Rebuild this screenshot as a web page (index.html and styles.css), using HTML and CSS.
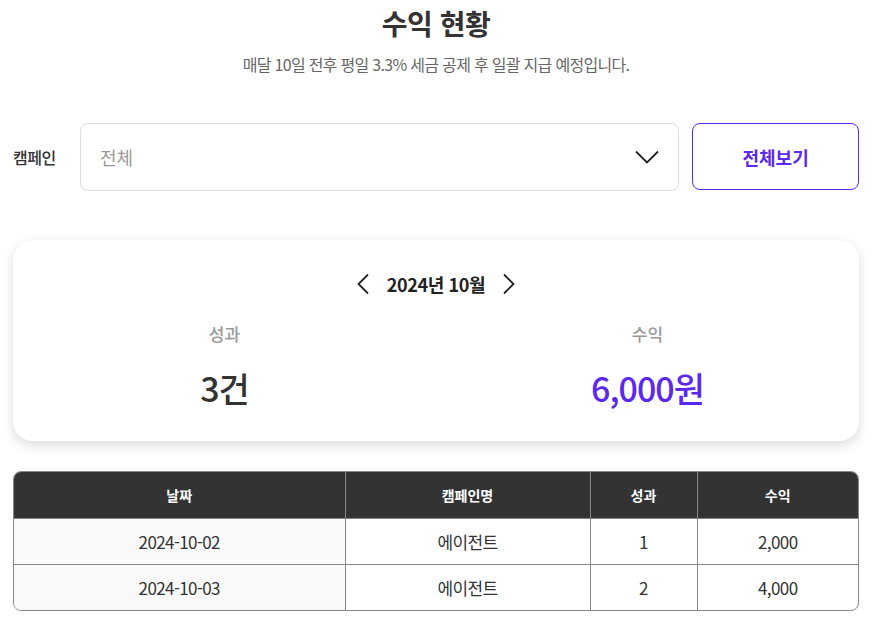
FILE: index.html
```html
<!DOCTYPE html>
<html lang="ko">
<head>
<meta charset="utf-8">
<link rel="stylesheet" href="styles.css">
</head>
<body>
<div class="page">
  <h1 class="title">수익 현황</h1>
  <p class="subtitle">매달 10일 전후 평일 3.3% 세금 공제 후 일괄 지급 예정입니다.</p>

  <div class="filter">
    <span class="filter-label">캠페인</span>
    <div class="select">
      <span class="select-value">전체</span>
      <svg class="select-arrow" width="24" height="14" viewBox="0 0 24 14"><path d="M1 1.5 L12 12.5 L23 1.5" fill="none" stroke="#222" stroke-width="1.8"/></svg>
    </div>
    <button class="btn-all">전체보기</button>
  </div>

  <div class="card">
    <div class="month-nav">
      <svg width="14" height="22" viewBox="0 0 14 22"><path d="M12 1.5 L2.5 11 L12 20.5" fill="none" stroke="#222" stroke-width="1.8"/></svg>
      <span class="month">2024년 10월</span>
      <svg width="14" height="22" viewBox="0 0 14 22"><path d="M2 1.5 L11.5 11 L2 20.5" fill="none" stroke="#222" stroke-width="1.8"/></svg>
    </div>
    <div class="stats">
      <div class="stat">
        <span class="stat-label">성과</span>
        <span class="stat-value">3건</span>
      </div>
      <div class="stat">
        <span class="stat-label">수익</span>
        <span class="stat-value purple">6,000원</span>
      </div>
    </div>
  </div>

  <div class="table-wrap">
    <table class="table">
      <colgroup>
        <col class="c1"><col class="c2"><col class="c3"><col class="c4">
      </colgroup>
      <thead>
        <tr><th>날짜</th><th>캠페인명</th><th>성과</th><th>수익</th></tr>
      </thead>
      <tbody>
        <tr><td class="date">2024-10-02</td><td>에이전트</td><td>1</td><td>2,000</td></tr>
        <tr><td class="date">2024-10-03</td><td>에이전트</td><td>2</td><td>4,000</td></tr>
      </tbody>
    </table>
  </div>
</div>
</body>
</html>
```

FILE: styles.css
```css
* { box-sizing: border-box; }
html, body { margin: 0; padding: 0; background: #fff; }
body {
  font-family: "Noto Sans CJK KR", "Noto Sans", sans-serif;
  color: #333;
}
.page {
  width: 846px;
  margin-left: 13px;
  padding-top: 3px;
}
.title {
  margin: 0;
  text-align: center;
  font-size: 28px;
  font-weight: 700;
  line-height: 40px;
  letter-spacing: -0.5px;
  color: #333;
}
.subtitle {
  margin: 9px 0 0;
  text-align: center;
  font-size: 16px;
  line-height: 24px;
  color: #666;
  letter-spacing: -0.7px;
}
.filter {
  display: flex;
  align-items: center;
  margin-top: 47px;
  height: 68px;
}
.filter-label {
  width: 67px;
  font-size: 16px;
  font-weight: 500;
  color: #333;
  letter-spacing: -0.5px;
}
.select {
  width: 600px;
  height: 68px;
  border: 1px solid #ddd;
  border-radius: 8px;
  display: flex;
  align-items: center;
  justify-content: space-between;
  padding: 0 19px 0 19px;
}
.select-value {
  font-size: 18px;
  color: #999;
}
.btn-all {
  margin-left: 13px;
  width: 167px;
  height: 67px;
  border: 1px solid #5a28f0;
  border-radius: 8px;
  background: #fff;
  color: #5a28f0;
  font-family: inherit;
  font-size: 18px;
  font-weight: 700;
  letter-spacing: 0;
  align-self: flex-start;
}
.card {
  margin-top: 49px;
  height: 201px;
  border-radius: 20px;
  background: #fff;
  box-shadow: 0 4px 12px rgba(0,0,0,0.15);
  padding-top: 31px;
}
.month-nav {
  display: flex;
  justify-content: center;
  align-items: center;
  gap: 17px;
  height: 26px;
}
.month {
  font-size: 18px;
  font-weight: 700;
  color: #222;
  letter-spacing: -0.4px;
}
.stats {
  display: grid;
  grid-template-columns: 1fr 1fr;
  margin-top: 24px;
}
.stat {
  display: flex;
  flex-direction: column;
  align-items: center;
}
.stat-label {
  font-size: 17px;
  font-weight: 500;
  color: #999;
  line-height: 26px;
}
.stat-value {
  margin-top: 18px;
  font-size: 34px;
  font-weight: 500;
  color: #333;
  line-height: 46px;
  letter-spacing: -1px;
}
.stat-value.purple { color: #5a28f0; }
.table-wrap {
  margin-top: 30px;
  border: 1px solid #888;
  border-radius: 8px;
  overflow: hidden;
}
.table {
  width: 100%;
  border-collapse: collapse;
  table-layout: fixed;
}
.c1 { width: 331px; }
.c2 { width: 245px; }
.c3 { width: 107px; }
.c4 { width: auto; }
.table th {
  background: #333;
  color: #fff;
  font-size: 14px;
  font-weight: 700;
  height: 46px;
  border-left: 1px solid #888;
  padding: 0;
}
.table td {
  height: 46px;
  text-align: center;
  font-size: 17px;
  color: #333;
  border-left: 1px solid #888;
  border-top: 1px solid #888;
  padding: 0;
  letter-spacing: -0.6px;
}
.table th:first-child, .table td:first-child { border-left: none; }
.table td.date { background: #f9f9f9; }
```
